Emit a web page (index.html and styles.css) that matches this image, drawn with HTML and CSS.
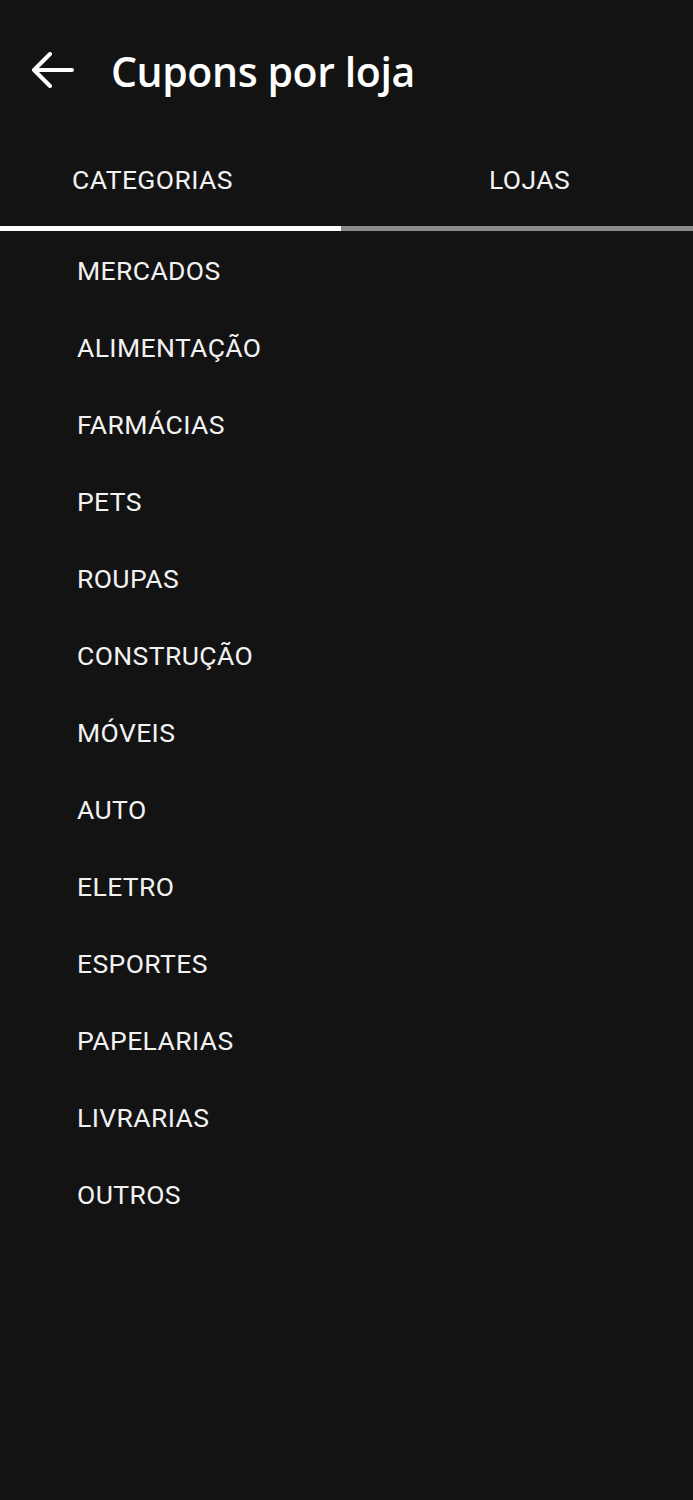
FILE: index.html
```html
<!DOCTYPE html>
<html lang="pt">
<head>
<meta charset="utf-8">
<title>Cupons por loja</title>
<link rel="stylesheet" href="styles.css">
</head>
<body>
<div class="app">
  <header class="topbar">
    <svg class="back" width="42" height="36" viewBox="0 0 42 36" aria-hidden="true">
      <path d="M40 18 H3 M18 2 L2 18 L18 34" fill="none" stroke="#fff" stroke-width="4" stroke-linecap="round" stroke-linejoin="round"/>
    </svg>
    <h1 class="title">Cupons por loja</h1>
  </header>
  <nav class="tabs">
    <div class="tab tab-cat">CATEGORIAS</div>
    <div class="tab tab-loj">LOJAS</div>
  </nav>
  <div class="indicator">
    <div class="ind-active"></div>
    <div class="ind-rest"></div>
  </div>
  <ul class="list">
    <li>MERCADOS</li>
    <li>ALIMENTAÇÃO</li>
    <li>FARMÁCIAS</li>
    <li>PETS</li>
    <li>ROUPAS</li>
    <li>CONSTRUÇÃO</li>
    <li>MÓVEIS</li>
    <li>AUTO</li>
    <li>ELETRO</li>
    <li>ESPORTES</li>
    <li>PAPELARIAS</li>
    <li>LIVRARIAS</li>
    <li>OUTROS</li>
  </ul>
</div>
</body>
</html>
```
FILE: styles.css
```css
html, body {
  margin: 0;
  padding: 0;
  background: #131313;
}
.app {
  width: 693px;
  min-height: 1500px;
  background: #131313;
  color: #f2f2f2;
  font-family: Roboto, "Liberation Sans", sans-serif;
}
.topbar {
  height: 142px;
  display: flex;
  align-items: center;
  padding-left: 32px;
  box-sizing: border-box;
}
.back {
  display: block;
  flex: none;
  margin-top: -2px;
}
.title {
  margin: 0 0 0 37px;
  font-family: "Open Sans", sans-serif;
  font-weight: 600;
  font-size: 41px;
  color: #fff;
  letter-spacing: -0.4px;
}
.tabs {
  display: grid;
  grid-template-columns: 341px 352px;
  height: 84px;
  align-items: center;
  font-size: 26.5px;
  letter-spacing: 0.4px;
  color: #f2f2f2;
}
.tab { line-height: 1; padding-bottom: 7px; }
.tab-cat { padding-left: 72px; }
.tab-loj { padding-left: 148px; }
.indicator {
  display: flex;
  height: 5px;
}
.ind-active { width: 341px; background: #ffffff; }
.ind-rest { flex: 1; background: #8a8a8a; }
.list {
  list-style: none;
  margin: 0;
  padding: 1px 0 0 77px;
}
.list li {
  height: 77px;
  display: flex;
  align-items: center;
  font-size: 26.5px;
  letter-spacing: 0.4px;
  color: #f2f2f2;
}
```
